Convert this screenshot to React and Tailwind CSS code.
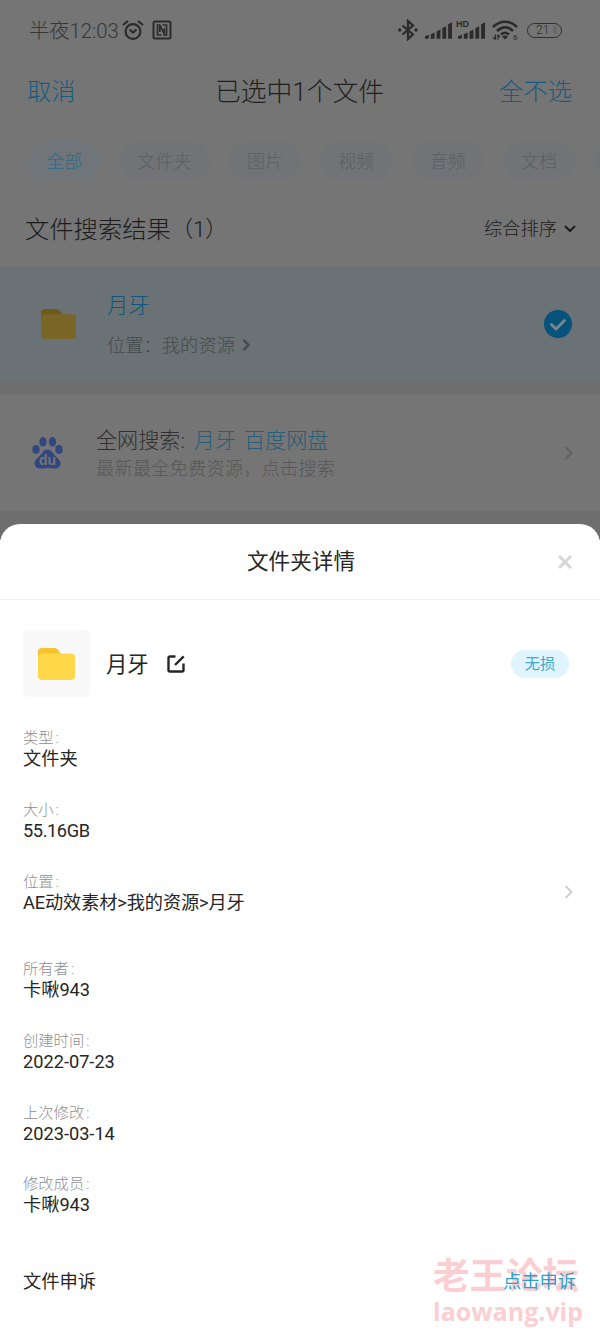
const chips = ["全部", "文件夹", "图片", "视频", "音频", "文档"];

const details = [
  { label: "类型", value: "文件夹", height: "h-[72px]" },
  { label: "大小", value: "55.16GB", height: "h-[72px]", tracking: "tracking-[-0.4px]" },
  { label: "位置", value: "AE动效素材>我的资源>月牙", height: "h-[87px]", tracking: "tracking-[-0.1px]", link: true },
  { label: "所有者", value: "卡啾943", height: "h-[72px]" },
  { label: "创建时间", value: "2022-07-23", height: "h-[72px]" },
  { label: "上次修改", value: "2023-03-14", height: "h-[71px]" },
  { label: "修改成员", value: "卡啾943", height: "h-[72px]" },
];

function Chevron({ className, width = 2 }) {
  return (
    <svg viewBox="0 0 8 14" className={className} fill="none" stroke="currentColor" strokeWidth={width}>
      <path d="M1 1l6 6-6 6" />
    </svg>
  );
}

function Folder({ className, back, front }) {
  return (
    <svg viewBox="0 0 37 32" className={className}>
      <path d="M0 4a4 4 0 0 1 4-4h12c2 0 3 .6 4 2l3 3.500v7H0z" fill={back} />
      <path d="M0 9a3.500 3.500 0 0 1 3.500-3.500h30A3.500 3.500 0 0 1 37 9v19a4 4 0 0 1-4 4H4a4 4 0 0 1-4-4z" fill={front} />
    </svg>
  );
}

function Signal({ className }) {
  return (
    <svg viewBox="0 0 28 17" className={className} fill="currentColor">
      <path d="M0 14.500L4 13v3a1 1 0 0 1-1 1H0z" />
      <path d="M6 12.500l4-2V16a1 1 0 0 1-1 1H6z" />
      <path d="M12 9.500l4-2V16a1 1 0 0 1-1 1h-3z" />
      <path d="M18 6l4-2v12a1 1 0 0 1-1 1h-3z" />
      <path d="M24 2l4-2v16a1 1 0 0 1-1 1h-3z" />
    </svg>
  );
}

function StatusBar() {
  return (
    <div className="flex h-[60px] items-center pl-[29px] pr-[38px] text-[#2b2b2b]">
      <span className="pt-[2px] text-[20.3px] font-light text-[#373737]">
        半夜<span>12:03</span>
      </span>
      <svg viewBox="0 0 22 20" className="ml-[3px] h-5 w-[22px]" fill="none" stroke="currentColor" strokeWidth="2.200">
        <circle cx="11" cy="11.500" r="7.400" />
        <path d="M1 5l5-4M21 5l-5-4M7.500 9.500l3.500 3 3.500-3" />
      </svg>
      <svg viewBox="0 0 20 20" className="ml-2 size-5" fill="none" stroke="currentColor" strokeWidth="2">
        <rect x="1.500" y="1.500" width="17" height="17" rx="1.500" />
        <path d="M9.500 15H5.500V5h2.300l4.400 8.500M10.500 5h4v10h-2.300V8.500M7.800 6v6" strokeWidth="1.700" />
      </svg>
      <div className="ml-auto flex items-center">
        <svg viewBox="0 0 20 22" className="h-[22px] w-5" fill="none" stroke="currentColor" strokeWidth="2.300">
          <path d="M4.500 6.500l10.500 9-5 4.500V2l5 4.500-10.500 9" />
          <circle cx="1.700" cy="11" r="1.700" fill="currentColor" stroke="none" />
          <circle cx="18" cy="11" r="1.700" fill="currentColor" stroke="none" />
        </svg>
        <Signal className="ml-[7px] h-[17px] w-[27px]" />
        <div className="relative ml-[6px]">
          <Signal className="h-[17px] w-[27px]" />
          <span className="absolute -left-[2px] -top-[2px] bg-[#757575] pr-px font-['Liberation_Sans'] text-[9px] font-bold leading-[8px]">HD</span>
        </div>
        <svg viewBox="0 0 26 21" className="ml-[7px] h-[21px] w-[26px]" fill="none" stroke="currentColor" strokeWidth="2.600">
          <path d="M1 7c7-7 17-7 24 0M5 11c5-5 11-5 16 0M9 14.500c3-2.500 5-2.500 8 0" />
          <path d="M10 16.500c2-1.200 4-1.200 6 0l-3 3z" fill="currentColor" stroke="none" />
          <path d="M3.500 14.500v5M6 14.500v5M1 17l2.500 2.500M8 17l-2-2" strokeWidth="1.300" />
          <text x="21" y="20" fontSize="8" fill="currentColor" stroke="none" fontFamily="Roboto">6</text>
        </svg>
        <div className="ml-[9px] flex h-[15px] w-[35px] items-center rounded-full border-[1.5px] border-[#2f2f2f] pl-[8px] font-[Roboto] text-[12px] font-light leading-none">
          21
          <span className="ml-[4px] h-2 w-[4px] bg-[#696969]" />
        </div>
      </div>
    </div>
  );
}

function SearchPage() {
  return (
    <div className="h-[540px] bg-[#757575]">
      <StatusBar />
      <div className="grid h-[62px] grid-cols-3 items-center pl-[27px] pr-7 pt-[2px] text-[24.3px] font-light text-[#155c81]">
        <span>取消</span>
        <span className="whitespace-nowrap text-center text-[25.800px] text-[#1f1f1f]">已选中1个文件</span>
        <span className="text-right">全不选</span>
      </div>
      <div className="flex h-[76px] items-center gap-[19px] overflow-hidden pl-[28px] text-[18px] font-light text-[#5c5f63]">
        {chips.map((c, i) => (
          <span
            key={c}
            className={`flex h-[37px] shrink-0 items-center rounded-full px-[18.2px] pt-[2px] ${i === 0 ? "bg-[#6f7578] text-[#2c6b88]" : "bg-[#717376]"}`}
          >
            {c}
          </span>
        ))}
        <span className="h-[37px] w-[72px] shrink-0 rounded-full bg-[#717376]" />
      </div>
      <div className="flex h-[69px] items-center justify-between pb-[7px] pl-[25px] pr-[24px] font-light text-[#1c1c1c]">
        <h2 className="flex items-center pt-[2px] text-[24.3px]">
          文件搜索结果<span className="text-[22.500px] tracking-[-0.3px]">（1）</span>
        </h2>
        <span className="flex items-center text-[18.3px]">
          综合排序
          <svg viewBox="0 0 12 8" className="ml-[7px] h-2 w-3" fill="none" stroke="currentColor" strokeWidth="2">
            <path d="M1 1l5 5 5-5" />
          </svg>
        </span>
      </div>

      <div className="flex h-[114px] items-center bg-[#6a7275] pl-[41px] pr-7">
        <Folder className="h-[30px] w-[35px]" back="#6f5a1c" front="#7a6727" />
        <div className="ml-[31px] pt-[3px] font-light">
          <div className="text-[21.300px] leading-[30px] text-[#0c577b]">月牙</div>
          <div className="mt-[11px] flex items-center text-[18.3px] leading-7 text-[#444a4d]">
            位置：我的资源
            <Chevron className="mb-[2px] ml-[7px] h-3 w-2" width={2.6} />
          </div>
        </div>
        <svg viewBox="0 0 28 28" className="mb-px ml-auto size-7">
          <circle cx="14" cy="14" r="14" fill="#06527a" />
          <path d="M7.500 14.500l4.500 4.500 8.500-8.500" fill="none" stroke="#77858c" strokeWidth="3" strokeLinecap="round" strokeLinejoin="round" />
        </svg>
      </div>

      <div className="h-[14px] bg-[#6e6e6e]" />

      <div className="flex h-[116px] items-center pl-[32px] pr-[27px]">
        <svg viewBox="0 0 31 32" className="h-8 w-[31px]" fill="#324781">
          <ellipse cx="11" cy="4.800" rx="3.600" ry="4.800" />
          <ellipse cx="20.500" cy="4.800" rx="3.600" ry="4.800" />
          <ellipse cx="4" cy="12.500" rx="3.700" ry="4.400" />
          <ellipse cx="27" cy="12.500" rx="3.700" ry="4.400" />
          <path d="M15.500 12.500c3.500 0 5 3 7 5.500 2.500 3 6.500 5 6 9-.5 3.500-3.500 5-6.500 4.500-4-.7-8-.7-13 0C6 32 3 30.500 2.500 27c-.5-4 3.500-6 6-9 2-2.500 3.500-5.500 7-5.500z" />
          <text x="15.500" y="28" textAnchor="middle" fontSize="14" fontWeight="bold" fontFamily="Liberation Sans" fill="#757575">du</text>
        </svg>
        <div className="ml-[33px] pt-[3px] font-light">
          <div className="flex text-[21.100px] leading-[29px] text-[#303030]">
            全网搜索:<span className="ml-[9px] text-[#255e76]">月牙</span>
            <span className="ml-[8px] text-[#255e76]">百度网盘</span>
          </div>
          <div className="text-[18.400px] leading-[28px] text-[#575757]">最新最全免费资源，点击搜索</div>
        </div>
        <Chevron className="ml-auto h-[14px] w-[9px] text-[#606060]" />
      </div>
      <div className="h-[29px] bg-[#6e6e6e]" />
    </div>
  );
}

function DetailSheet() {
  return (
    <section className="relative -mt-[16px] h-[809px] rounded-t-[20px] bg-white text-[#262626]">
      <header className="flex h-[76px] items-center border-b border-[#f0f0f0] pl-[247px] pr-[28px]">
        <h1 className="pt-[2px] text-[21.600px]">文件夹详情</h1>
        <svg viewBox="0 0 14 14" className="ml-auto size-[14px] text-[#d7d7d7]" fill="none" stroke="currentColor" strokeWidth="3">
          <path d="M1 1l12 12M13 1L1 13" />
        </svg>
      </header>

      <div className="mt-[30px] flex h-[67px] items-center pl-[23px] pr-[31px]">
        <div className="flex size-[67px] items-center justify-center rounded-[5px] bg-[#f9f9f9]">
          <Folder className="h-8 w-[37px]" back="#f6c32f" front="#ffd84a" />
        </div>
        <span className="ml-4 pt-[3px] text-[21.3px]">月牙</span>
        <svg viewBox="0 0 18 18" className="ml-[18px] size-[18px]" fill="none" stroke="currentColor" strokeWidth="2.400">
          <path d="M8.500 1.500H3A1.500 1.500 0 0 0 1.500 3v12A1.500 1.500 0 0 0 3 16.500h12a1.500 1.500 0 0 0 1.500-1.500V8.500M8 10l8.700-8.700" />
        </svg>
        <span className="ml-auto flex h-7 w-[58px] items-center justify-center rounded-full bg-[#e0f4fd] pt-[2px] text-[15.300px] text-[#42abcd]">无损</span>
      </div>

      <dl className="mt-[31px] pl-[23px] pr-[27px]">
        {details.map(d => (
          <div key={d.label} className={`relative ${d.height}`}>
            <dt className="text-[15.300px] font-light leading-[21px] text-[#8f8f8f]">
              {d.label}<span className="ml-[2px]">:</span>
            </dt>
            <dd className={`text-[18.200px] leading-5 ${d.tracking || ""}`}>{d.value}</dd>
            {d.link && <Chevron className="absolute right-0 top-[13px] h-[14px] w-[9px] text-[#cfcfcf]" />}
          </div>
        ))}
      </dl>

      {/* forum watermark */}
      <div className="pointer-events-none absolute left-[433px] top-[731px] whitespace-nowrap font-bold text-[#fbcfd2]">
        <div className="text-[36.500px] leading-[44px]">老王论坛</div>
        <div className="font-['Open_Sans'] text-[25px] leading-[24px]">laowang.vip</div>
      </div>

      <footer className="relative mt-[16px] flex h-[40px] items-center justify-between pl-[23px] pr-6 text-[18.3px]">
        <span>文件申诉</span>
        <span className="text-[#2c9fce]">点击申诉</span>
      </footer>
    </section>
  );
}

export default function App() {
  return (
    <main className="h-[1333px] w-[600px] overflow-hidden bg-white font-[Roboto,'Noto_Sans_CJK_SC',sans-serif]">
      <SearchPage />
      <DetailSheet />
    </main>
  );
}
